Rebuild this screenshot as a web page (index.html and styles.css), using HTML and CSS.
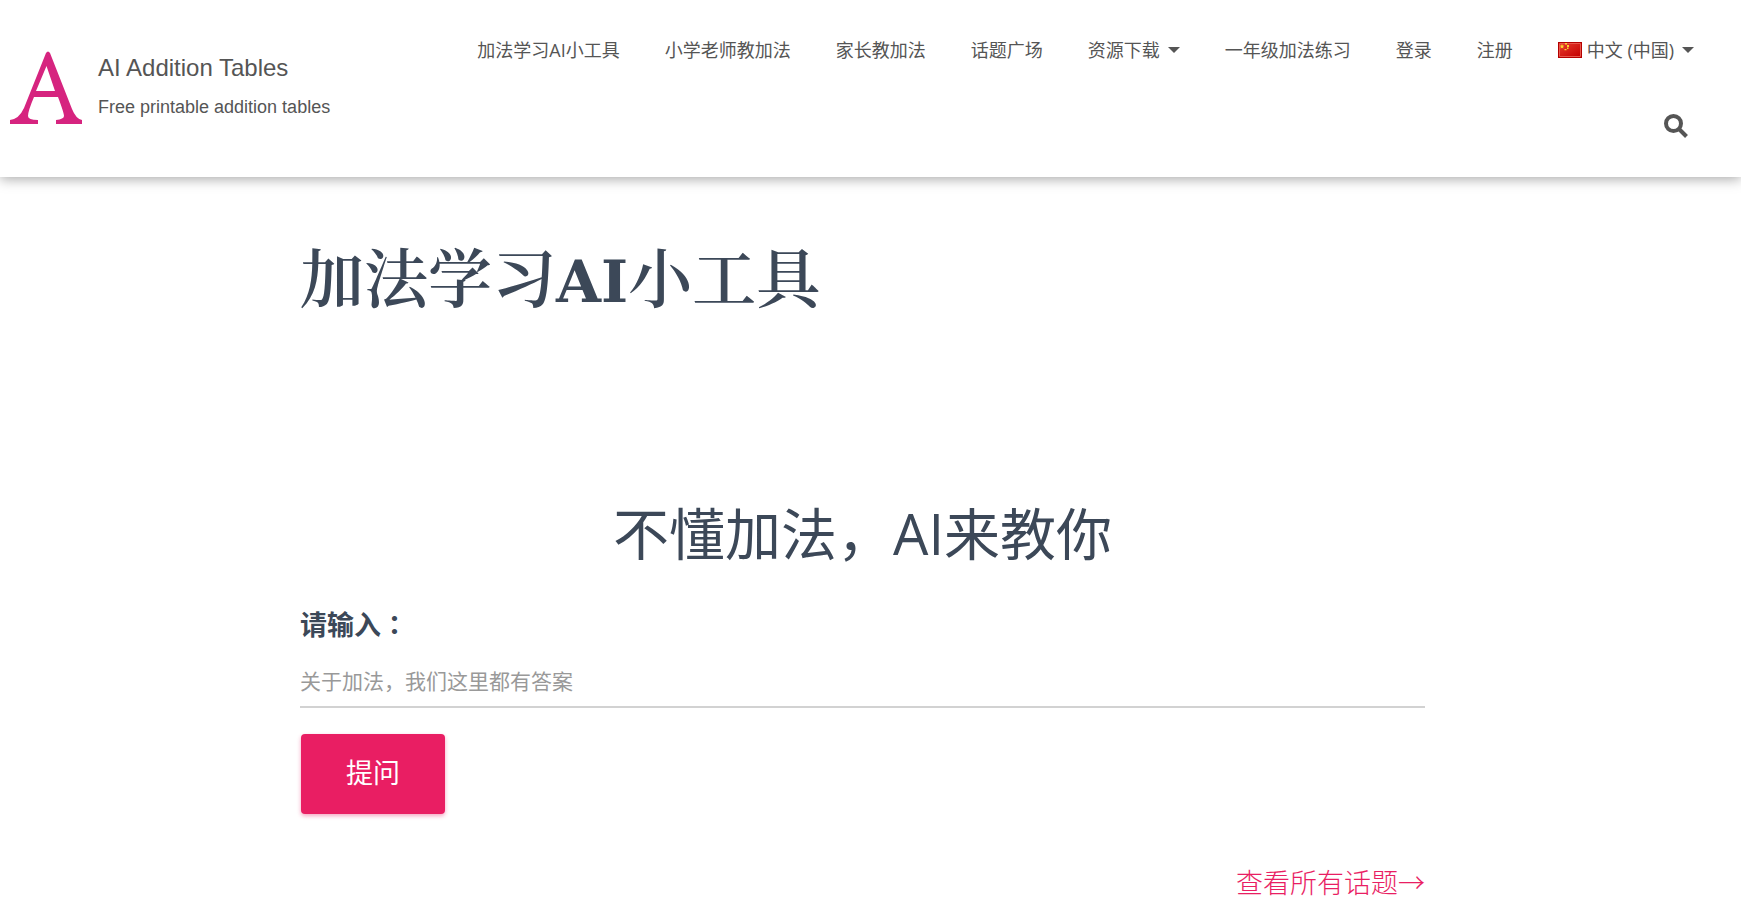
FILE: index.html
```html
<!DOCTYPE html>
<html lang="zh-CN">
<head>
<meta charset="utf-8">
<meta name="viewport" content="width=device-width, initial-scale=1">
<title>AI Addition Tables</title>
<link rel="stylesheet" href="styles.css">
</head>
<body>
<header class="site-header">
  <a class="brand" href="#">
    <svg class="brand-logo" viewBox="0 0 72 74" aria-hidden="true"><path fill="#d6247f" fill-rule="evenodd" d="M36 2Q38 -1 40 2L62 58Q66 68 72 69V73H46V69Q54 68 54 65Q54 62 48 46H24Q18 60 18 65Q18 69 28 69V73H0V69Q9 68 14 57ZM36.500 15L26 40H45Z"/></svg>
    <span class="brand-text">
      <span class="brand-title">AI Addition Tables</span>
      <span class="brand-tagline">Free printable addition tables</span>
    </span>
  </a>
  <nav class="main-nav" aria-label="主导航">
    <ul class="nav-list">
      <li><a href="#">加法学习AI小工具</a></li>
      <li><a href="#">小学老师教加法</a></li>
      <li><a href="#">家长教加法</a></li>
      <li><a href="#">话题广场</a></li>
      <li><a href="#">资源下载<span class="caret"></span></a></li>
      <li><a href="#">一年级加法练习</a></li>
      <li><a href="#">登录</a></li>
      <li><a href="#">注册</a></li>
      <li><a href="#"><svg class="flag" viewBox="0 0 24 16" aria-hidden="true"><defs><linearGradient id="red" x1="0" y1="0" x2="1" y2="1"><stop offset="0" stop-color="#e63b2e"/><stop offset="1" stop-color="#c40000"/></linearGradient></defs><path fill="#b40000" d="M0 0h24v16H0z"/><path fill="url(#red)" stroke="#e8574c" stroke-width="1" d="M1.500 1.500h21v13h-21z"/><path fill="#fbd52f" d="M4 2l.7 1.500 1.600.2-1.200 1.100.3 1.700L4 5.700l-1.400.8.3-1.700L1.700 3.700l1.600-.2zM7 1h2v1.500H7zM9 3h2v2H9zM9 5.500h1.500v1.500H9zM6.500 7h2v1.200h-2z"/></svg>中文 (中国)<span class="caret"></span></a></li>
    </ul>
    <button class="search-button" type="button" aria-label="搜索"><svg viewBox="0 0 24 24" aria-hidden="true"><circle cx="9.500" cy="9.500" r="7.500"/><path d="M15 15L22.500 22.500"/></svg></button>
  </nav>
</header>
<main class="page">
  <div class="container">
    <h1 class="page-title">加法学习<span class="latin">AI</span>小工具</h1>
    <form class="ask">
      <h2 class="ask-title">不懂加法，AI来教你</h2>
      <label class="ask-label" for="question">请输入<span class="colon" lang="zh-TW">：</span></label>
      <input class="ask-input" id="question" type="text" placeholder="关于加法，我们这里都有答案">
      <button class="ask-button" type="button">提问</button>
    </form>
    <a class="all-topics" href="#">查看所有话题→</a>
  </div>
</main>
</body>
</html>
```
FILE: styles.css
```css
* { box-sizing: border-box; }
html, body { margin: 0; }
body {
  background: #fff;
  color: #3c4858;
  font-family: "Open Sans", "Noto Sans CJK SC", sans-serif;
}
a { color: inherit; text-decoration: none; }

.site-header {
  display: flex;
  justify-content: space-between;
  align-items: flex-start;
  height: 177px;
  padding: 28px 24px 0 10px;
  box-shadow: 0 2px 12px rgba(0, 0, 0, 0.35);
  color: #555;
}
.brand {
  display: flex;
  flex: none;
  gap: 16px;
  padding-top: 23px;
  font-family: "Liberation Sans", sans-serif;
}
.brand-logo { width: 72px; height: 74px; }
.brand-text { display: flex; flex-direction: column; gap: 10px; padding-top: 1px; }
.brand-title { font-size: 24px; line-height: 32px; }
.brand-tagline { font-size: 18px; line-height: 26px; }

.main-nav { display: flex; flex-direction: column; align-items: flex-end; gap: 42px; }
.nav-list { display: flex; margin: 0; padding: 0; list-style: none; }
.nav-list a {
  display: flex;
  align-items: center;
  padding: 0 23px 0 22px;
  font-size: 18px;
  font-weight: 400;
  line-height: 44px;
  white-space: nowrap;
}
.caret {
  margin-left: 8px;
  border: 6px solid transparent;
  border-top-color: #555;
  border-bottom: 0;
}
.flag { width: 24px; height: 16px; margin-right: 5px; }
.search-button {
  display: flex;
  margin-right: 29px;
  padding: 0;
  border: 0;
  background: none;
}
.search-button svg {
  width: 24px;
  height: 24px;
  fill: none;
  stroke: #555;
  stroke-width: 4;
}

.page { padding-right: 16px; }
.container {
  display: flex;
  flex-direction: column;
  max-width: 1125px;
  margin: 0 auto;
  padding-top: 63px;
}
.page-title {
  margin: 0;
  font-family: "DejaVu Serif", "Noto Serif CJK SC", "Noto Sans CJK SC", serif;
  font-size: 64px;
  font-weight: 600;
  line-height: 80px;
}
.page-title .latin { font-size: 58px; font-weight: 700; }
.ask { display: flex; flex-direction: column; align-items: flex-start; padding-top: 171px; }
.ask-title {
  align-self: center;
  margin: 0;
  font-size: 56px;
  font-weight: 400;
  line-height: 80px;
}
.ask-label { margin-top: 31px; font-size: 27px; font-weight: 700; line-height: 40px; }
.colon { font-family: "Noto Sans CJK TC", sans-serif; }
.ask-input {
  width: 100%;
  height: 52px;
  margin-top: 11px;
  padding: 0;
  border: 0;
  border-bottom: 2px solid #d2d2d2;
  background: none;
  color: #555;
  font-family: inherit;
  font-size: 21px;
  font-weight: 400;
}
.ask-input::placeholder { color: #999; opacity: 1; }
.ask-button {
  height: 80px;
  margin: 26px 1px 0;
  padding: 0 45px 6px;
  border: 0;
  border-radius: 4px;
  background: #e91e63;
  box-shadow: 0 2px 4px rgba(233, 30, 99, 0.4);
  color: #fff;
  font-family: inherit;
  font-size: 27px;
}
.all-topics {
  align-self: flex-end;
  margin-top: 48px;
  color: #e91e63;
  font-family: "Noto Sans CJK SC", sans-serif;
  font-size: 27px;
  font-weight: 300;
  line-height: 40px;
}
```
